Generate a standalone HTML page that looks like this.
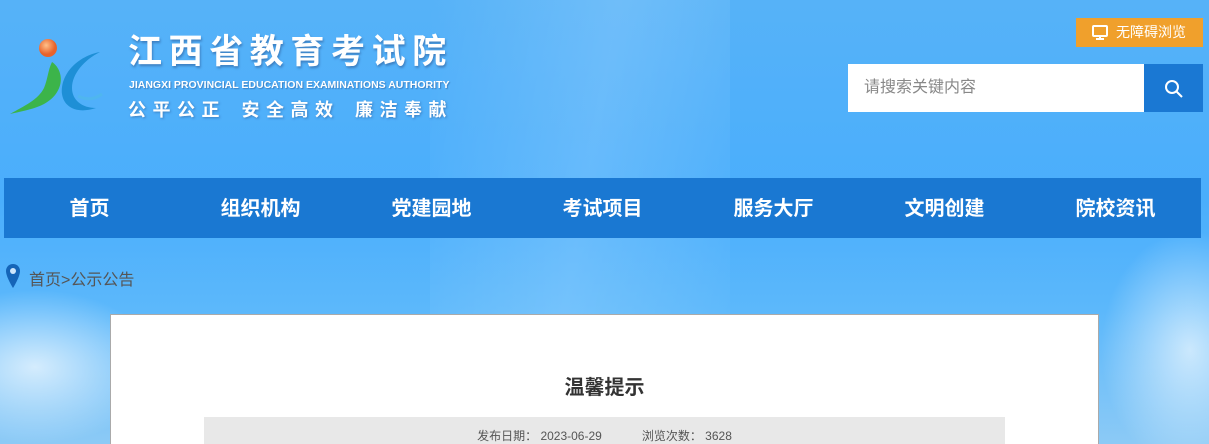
<!DOCTYPE html>
<html style="width:1209px;height:444px;overflow:hidden"><head><meta charset="utf-8"><style>
*{margin:0;padding:0;box-sizing:border-box}
body{width:1209px;height:444px;overflow:hidden;position:relative;font-family:"Liberation Sans","Noto Sans CJK SC",sans-serif;
background:linear-gradient(180deg,#56b2f8 0%,#4aaefc 45%,#5cb8fb 70%,#8ccaf6 100%);}
.glow{position:absolute;left:430px;top:0;width:300px;height:444px;background:linear-gradient(100deg,rgba(255,255,255,0) 0%,rgba(255,255,255,.15) 50%,rgba(255,255,255,0) 100%);}
.cloudL{position:absolute;left:-90px;top:290px;width:250px;height:154px;border-radius:50% 50% 0 0;background:radial-gradient(closest-side,rgba(255,255,255,.7),rgba(255,255,255,0));}
.cloudR{position:absolute;left:1100px;top:230px;width:109px;height:214px;background:radial-gradient(ellipse at 90px 120px,rgba(255,255,255,.65),rgba(255,255,255,0) 70%);}
.title{position:absolute;left:128px;top:32px;color:#fff;font-size:34px;font-weight:bold;letter-spacing:6.6px;text-shadow:1px 2px 2px rgba(40,80,140,.5);line-height:40px;white-space:nowrap}
.en{position:absolute;left:129px;top:79px;color:#fff;font-size:10.5px;font-weight:bold;text-shadow:1px 1px 1px rgba(40,80,140,.5);white-space:nowrap}
.slogan{position:absolute;left:128px;top:96px;color:#fff;font-size:18px;font-weight:bold;letter-spacing:6.5px;text-shadow:1px 1px 2px rgba(40,80,140,.5);word-spacing:4px;white-space:nowrap}
.acc{position:absolute;left:1076px;top:18px;width:127px;height:29px;background:#f0a02c;color:#fff;font-size:14px;line-height:29px;padding-left:40px}
.acc svg{position:absolute;left:16px;top:7px}
.search{position:absolute;left:848px;top:64px;width:296px;height:48px;background:#fff;color:#888;font-size:16px;line-height:48px;padding-left:16px}
.sbtn{position:absolute;left:1144px;top:64px;width:59px;height:48px;background:#1a78d3}
.nav{position:absolute;left:4px;top:178px;width:1197px;height:60px;background:#1a78d2;display:flex}
.nav div{width:171px;text-align:center;color:#fff;font-size:20px;font-weight:bold;line-height:62px}
.crumb{position:absolute;left:29px;top:266px;color:#555;font-size:16px}
.box{position:absolute;left:110px;top:314px;width:989px;height:130px;background:#fff;border:1px solid #aaa;border-bottom:none;overflow:hidden}
.h{position:absolute;left:0;width:100%;top:56px;text-align:center;font-size:20px;font-weight:bold;color:#333}
.meta{position:absolute;left:93px;top:102px;width:801px;height:28px;background:#e8e8e8;color:#555;font-size:12px;padding-top:10px;text-align:center}
</style></head><body>
<div class="glow"></div><div class="cloudL"></div><div class="cloudR"></div>
<svg style="position:absolute;left:8px;top:34px" width="100" height="90" viewBox="0 0 100 90">
<defs><radialGradient id="b" cx=".4" cy=".35"><stop offset="0" stop-color="#ffc08a"/><stop offset="1" stop-color="#e8622a"/></radialGradient></defs>
<circle cx="40" cy="14" r="9" fill="url(#b)"/>
<path d="M44 28 C56 36 58 58 36 70 C24 76 10 78 2 80 C16 72 30 66 36 54 C40 44 40 36 44 28Z" fill="#3cb44a"/>
<path d="M92 18 C70 22 52 40 54 60 C56 74 70 80 88 74 C74 74 64 66 64 54 C64 40 76 26 92 18Z" fill="#1e8fd6"/>
<path d="M70 62 C78 66 86 66 94 60" stroke="#4fb6ef" stroke-width="3" fill="none"/>
</svg>
<div class="title">江西省教育考试院</div>
<div class="en">JIANGXI PROVINCIAL EDUCATION EXAMINATIONS AUTHORITY</div>
<div class="slogan">公平公正 安全高效 廉洁奉献</div>
<div class="acc"><svg width="16" height="15" viewBox="0 0 16 15"><rect x="1" y="1" width="14" height="10" rx="1" fill="none" stroke="#fff" stroke-width="2"/><rect x="7" y="11" width="2" height="2" fill="#fff"/><rect x="4" y="13" width="8" height="2" fill="#fff"/></svg>无障碍浏览</div>
<div class="search">请搜索关键内容</div>
<div class="sbtn"><svg style="position:absolute;left:20px;top:15px" width="20" height="20" viewBox="0 0 20 20"><circle cx="8" cy="8" r="6" fill="none" stroke="#fff" stroke-width="2"/><path d="M12.5 12.5L18 18" stroke="#fff" stroke-width="2"/></svg></div>
<div class="nav"><div>首页</div><div>组织机构</div><div>党建园地</div><div>考试项目</div><div>服务大厅</div><div>文明创建</div><div>院校资讯</div></div>
<svg style="position:absolute;left:5px;top:263px" width="16" height="26" viewBox="0 0 16 26"><path d="M8 1C4 1 1 4 1 8c0 6 7 17 7 17s7-11 7-17c0-4-3-7-7-7z" fill="#1565b8"/><circle cx="8" cy="8" r="3" fill="#cfe6fb"/></svg>
<div class="crumb">首页&gt;公示公告</div>
<div class="box"><div class="h">温馨提示</div><div class="meta">发布日期：&nbsp;2023-06-29&nbsp;&nbsp;&nbsp;&nbsp;&nbsp;&nbsp;&nbsp;&nbsp;&nbsp;&nbsp;&nbsp;&nbsp;浏览次数：&nbsp;3628</div></div>
</body></html>
